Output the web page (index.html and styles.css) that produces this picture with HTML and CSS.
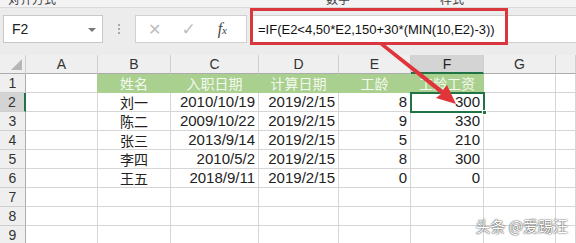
FILE: index.html
```html
<!DOCTYPE html>
<html lang="zh-CN">
<head>
    <meta charset="UTF-8">
    <title>工龄工资</title>
    <link rel="stylesheet" href="styles.css">
</head>
<body>
    <div class="ribbon">
        <span class="grp">对齐方式</span>
        <span class="grp">数字</span>
        <span class="grp">样式</span>
    </div>

    <div class="fbar">
        <div class="namebox">F2<span class="caret"></span></div>
        <div class="dots"><i></i><i></i><i></i></div>
        <div class="btns">
            <span class="cancel">✕</span>
            <span class="enter">✓</span>
            <span class="fx">f<sub>x</sub></span>
        </div>
        <div class="formula">=IF(E2&lt;4,50*E2,150+30*(MIN(10,E2)-3))</div>
    </div>

    <div class="sheet">
        <!-- 列标 -->
        <div class="hd corner"><span class="tri"></span></div>
        <div class="hd">A</div>
        <div class="hd">B</div>
        <div class="hd">C</div>
        <div class="hd">D</div>
        <div class="hd">E</div>
        <div class="hd on-col">F</div>
        <div class="hd">G</div>
        <div class="hd"></div>

        <!-- 1 -->
        <div class="rh">1</div>
        <div class="c pre-green"></div>
        <div class="c th">姓名</div>
        <div class="c th">入职日期</div>
        <div class="c th">计算日期</div>
        <div class="c th">工龄</div>
        <div class="c th">工龄工资</div>
        <div class="c"></div>
        <div class="c"></div>

        <!-- 2 -->
        <div class="rh on-row">2</div>
        <div class="c"></div>
        <div class="c mid">刘一</div>
        <div class="c num">2010/10/19</div>
        <div class="c num">2019/2/15</div>
        <div class="c num">8</div>
        <div class="c num active">300<span class="handle"></span></div>
        <div class="c"></div>
        <div class="c"></div>

        <!-- 3 -->
        <div class="rh">3</div>
        <div class="c"></div>
        <div class="c mid">陈二</div>
        <div class="c num">2009/10/22</div>
        <div class="c num">2019/2/15</div>
        <div class="c num">9</div>
        <div class="c num">330</div>
        <div class="c"></div>
        <div class="c"></div>

        <!-- 4 -->
        <div class="rh">4</div>
        <div class="c"></div>
        <div class="c mid">张三</div>
        <div class="c num">2013/9/14</div>
        <div class="c num">2019/2/15</div>
        <div class="c num">5</div>
        <div class="c num">210</div>
        <div class="c"></div>
        <div class="c"></div>

        <!-- 5 -->
        <div class="rh">5</div>
        <div class="c"></div>
        <div class="c mid">李四</div>
        <div class="c num">2010/5/2</div>
        <div class="c num">2019/2/15</div>
        <div class="c num">8</div>
        <div class="c num">300</div>
        <div class="c"></div>
        <div class="c"></div>

        <!-- 6 -->
        <div class="rh">6</div>
        <div class="c"></div>
        <div class="c mid">王五</div>
        <div class="c num">2018/9/11</div>
        <div class="c num">2019/2/15</div>
        <div class="c num">0</div>
        <div class="c num">0</div>
        <div class="c"></div>
        <div class="c"></div>

        <div class="rh">7</div>
        <div class="c"></div><div class="c"></div><div class="c"></div><div class="c"></div>
        <div class="c"></div><div class="c"></div><div class="c"></div><div class="c"></div>

        <div class="rh">8</div>
        <div class="c"></div><div class="c"></div><div class="c"></div><div class="c"></div>
        <div class="c"></div><div class="c"></div><div class="c"></div><div class="c"></div>

        <div class="rh">9</div>
        <div class="c"></div><div class="c"></div><div class="c"></div><div class="c"></div>
        <div class="c"></div><div class="c"></div><div class="c"></div><div class="c"></div>
    </div>

    <!-- 标注：红框 + 箭头 -->
    <div class="mark-box"></div>
    <svg class="mark-arrow" width="100" height="70" viewBox="0 0 100 70">
        <polygon points="0,1 3,-1 63,46 67,41 76,60 56,54 61,50" fill="#e0343a"/>
    </svg>

    <div class="watermark">头条 @爱踢汪</div>
</body>
</html>
```

FILE: styles.css
```css
*{
    box-sizing: border-box;
}
body{
    margin: 0;
    width: 576px;
    height: 243px;
    overflow: hidden;
    position: relative;
    background: #fff;
    font-family: "Liberation Sans", "Noto Sans CJK SC", sans-serif;
    font-size: 14px;
    color: #222;
}

/* 功能区底部 */
.ribbon{
    height: 8px;
    background: #f3f3f3;
    border-bottom: 1px solid #dadada;
    overflow: hidden;
    position: relative;
}
.ribbon .grp{
    position: absolute;
    top: -8px;
    font-size: 12px;
    line-height: 14px;
    color: #444;
    font-family: "Noto Sans CJK SC", sans-serif;
}
.ribbon .grp:nth-child(1){ left: 8px; }
.ribbon .grp:nth-child(2){ left: 326px; }
.ribbon .grp:nth-child(3){ left: 440px; }

/* 编辑栏 */
.fbar{
    height: 47px;
    background: #ececec;
    display: flex;
    align-items: flex-start;
    padding-top: 7px;
}
.namebox{
    margin-left: 3px;
    width: 100px;
    height: 28px;
    background: #fff;
    border: 1px solid #c8c8c8;
    display: flex;
    align-items: center;
    padding-left: 8px;
    font-size: 14px;
    position: relative;
}
.caret{
    position: absolute;
    right: 6px;
    top: 12px;
    border-left: 4px solid transparent;
    border-right: 4px solid transparent;
    border-top: 4px solid #777;
}
.dots{
    width: 32px;
    height: 28px;
    display: flex;
    flex-direction: column;
    align-items: center;
    justify-content: center;
    gap: 2px;
}
.dots i{
    width: 2px;
    height: 2px;
    background: #a8a8a8;
}
.btns{
    width: 112px;
    height: 28px;
    background: #fff;
    border: 1px solid #d0d0d0;
    display: flex;
    align-items: center;
}
.btns .cancel{
    margin-left: 12px;
    color: #bdbdbd;
    font-size: 16px;
    font-family: "DejaVu Sans", sans-serif;
}
.btns .enter{
    margin-left: 20px;
    color: #bdbdbd;
    font-size: 17px;
    font-family: "DejaVu Sans", sans-serif;
}
.btns .fx{
    margin-left: 22px;
    font-family: "Liberation Serif", serif;
    font-style: italic;
    font-size: 16px;
    color: #444;
}
.btns .fx sub{
    font-size: 11px;
    vertical-align: 0;
}
.formula{
    margin-left: 3px;
    flex: 1;
    height: 28px;
    background: #fff;
    border-top: 1px solid #d0d0d0;
    border-bottom: 1px solid #d0d0d0;
    padding-left: 8px;
    line-height: 27px;
    font-size: 13px;
    color: #111;
}

/* 表格 */
.sheet{
    display: grid;
    grid-template-columns: 26px 72px 73px 88px 80px 72px 73px 72px 1fr;
    grid-auto-rows: 19px;
}
.hd,.rh,.c{
    border-right: 1px solid #d6d6d6;
    border-bottom: 1px solid #d6d6d6;
    line-height: 18px;
    white-space: nowrap;
    overflow: hidden;
}
.hd{
    background: #efefef;
    border-right-color: #cfcfcf;
    border-bottom-color: #acacac;
    text-align: center;
    color: #333;
    font-size: 14px;
}
.corner{
    position: relative;
}
.tri{
    position: absolute;
    right: 3px;
    bottom: 3px;
    border-left: 11px solid transparent;
    border-bottom: 11px solid #b6b6b6;
}
.hd.on-col{
    background: #d4d4d4;
    border-bottom: 2px solid #217346;
    color: #222;
}
.rh{
    background: #efefef;
    border-right-color: #acacac;
    border-bottom-color: #cfcfcf;
    text-align: center;
    color: #333;
}
.rh.on-row{
    background: #d4d4d4;
    border-right: 2px solid #217346;
}
.c.th{
    background: #a9d08e;
    border-color: #a9d08e;
    color: #f3f9ee;
    text-align: center;
    font-family: "Noto Sans CJK SC", sans-serif;
}
.c.pre-green{
    border-right-color: #a9d08e;
}
.c.mid{
    text-align: center;
    font-family: "Noto Sans CJK SC", sans-serif;
}
.c.num{
    text-align: right;
    padding-right: 3px;
    font-size: 15px;
}
.c.active{
    position: relative;
    overflow: visible;
}
.c.active::after{
    content: "";
    position: absolute;
    left: -1px;
    top: -1px;
    right: -2px;
    bottom: -2px;
    border: 2px solid #217346;
}
.handle{
    position: absolute;
    right: -4px;
    bottom: -4px;
    width: 5px;
    height: 5px;
    background: #217346;
    border: 1px solid #fff;
    z-index: 2;
}

/* 标注 */
.mark-box{
    position: absolute;
    left: 250px;
    top: 8px;
    width: 258px;
    height: 37px;
    border: 3px solid #d9363e;
}
.mark-arrow{
    position: absolute;
    left: 380px;
    top: 44px;
    overflow: visible;
}
.watermark{
    position: absolute;
    right: 8px;
    bottom: 7px;
    font-family: "Noto Sans CJK SC", sans-serif;
    font-size: 15px;
    color: #fff;
    text-shadow: 0 0 1px #333, 0 0 2px #555;
}
```
